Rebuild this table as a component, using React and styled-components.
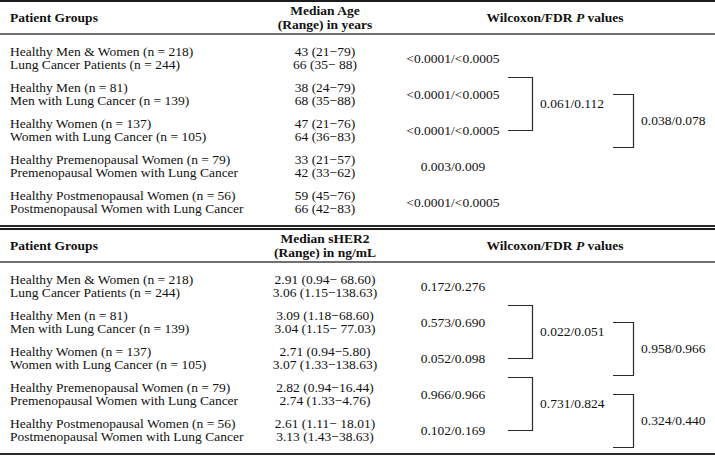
import React from 'react';
import styled, { createGlobalStyle } from 'styled-components';

const GlobalStyle = createGlobalStyle`
  html, body { margin: 0; padding: 0; background: #ffffff; }
  body {
    font-family: "Liberation Serif", "Times New Roman", serif;
    font-size: 13.5px;
    color: #111;
  }
`;

const PITCH = 36;
const L1 = { x1: 508, x2: 532, label: 540 };
const L2 = { x1: 613, x2: 633, label: 641 };

const tables = [
  {
    median: ['Median Age', '(Range) in years'],
    groups: [
      { a: 'Healthy Men & Women (n = 218)', b: 'Lung Cancer Patients (n = 244)', ma: '43 (21−79)', mb: '66 (35− 88)', p: '<0.0001/<0.0005' },
      { a: 'Healthy Men (n = 81)', b: 'Men with Lung Cancer (n = 139)', ma: '38 (24−79)', mb: '68 (35−88)', p: '<0.0001/<0.0005' },
      { a: 'Healthy Women (n = 137)', b: 'Women with Lung Cancer (n = 105)', ma: '47 (21−76)', mb: '64 (36−83)', p: '<0.0001/<0.0005' },
      { a: 'Healthy Premenopausal Women (n = 79)', b: 'Premenopausal Women with Lung Cancer', ma: '33 (21−57)', mb: '42 (33−62)', p: '0.003/0.009' },
      { a: 'Healthy Postmenopausal Women (n = 56)', b: 'Postmenopausal Women with Lung Cancer', ma: '59 (45−76)', mb: '66 (42−83)', p: '<0.0001/<0.0005' },
    ],
    brackets: [
      { level: 1, start: 1, label: '0.061/0.112' },
      { level: 2, start: 1, label: '0.038/0.078' },
    ],
  },
  {
    median: ['Median sHER2', '(Range) in ng/mL'],
    groups: [
      { a: 'Healthy Men & Women (n = 218)', b: 'Lung Cancer Patients (n = 244)', ma: '2.91 (0.94− 68.60)', mb: '3.06 (1.15−138.63)', p: '0.172/0.276' },
      { a: 'Healthy Men (n = 81)', b: 'Men with Lung Cancer (n = 139)', ma: '3.09 (1.18−68.60)', mb: '3.04 (1.15− 77.03)', p: '0.573/0.690' },
      { a: 'Healthy Women (n = 137)', b: 'Women with Lung Cancer (n = 105)', ma: '2.71 (0.94−5.80)', mb: '3.07 (1.33−138.63)', p: '0.052/0.098' },
      { a: 'Healthy Premenopausal Women (n = 79)', b: 'Premenopausal Women with Lung Cancer', ma: '2.82 (0.94−16.44)', mb: '2.74 (1.33−4.76)', p: '0.966/0.966' },
      { a: 'Healthy Postmenopausal Women (n = 56)', b: 'Postmenopausal Women with Lung Cancer', ma: '2.61 (1.11− 18.01)', mb: '3.13 (1.43−38.63)', p: '0.102/0.169' },
    ],
    brackets: [
      { level: 1, start: 1, label: '0.022/0.051' },
      { level: 2, start: 1, label: '0.958/0.966' },
      { level: 1, start: 3, label: '0.731/0.824' },
      { level: 2, start: 3, label: '0.324/0.440' },
    ],
  },
];

const Page = styled.div`
  width: 715px;
  display: flex;
  flex-direction: column;
  gap: 1px;
`;

const Table = styled.section`
  border-top: 2px solid #1c1c1c;
  border-bottom: 2px solid #2a2a2a;
`;

const Row = styled.div`
  display: grid;
  grid-template-columns: 255px 140px 1fr;
  align-items: center;
`;

const HeaderRow = styled(Row)`
  height: 31px;
  border-bottom: 2px solid #707070;
  font-weight: bold;
  line-height: 14px;
`;

const HeadLabel = styled.div`
  padding-left: 10px;
`;

const HeadCenter = styled.div`
  text-align: center;
  white-space: nowrap;
`;

const Body = styled.div`
  position: relative;
  margin: 5px 0;
`;

const Group = styled(Row)`
  height: ${PITCH}px;
  line-height: 13px;
`;

const LabelCell = styled.div`
  padding-left: 10px;
  white-space: nowrap;
`;

const MedianCell = styled.div`
  text-align: center;
  white-space: pre;
`;

const PCell = styled.div`
  width: 116px;
  text-align: center;
  white-space: nowrap;
`;

const Overlay = styled.div`
  position: absolute;
  inset: 0;
  pointer-events: none;
`;

const BracketSvg = styled.svg`
  position: absolute;
  left: 0;
  top: 0;
`;

const BracketLabel = styled.span`
  position: absolute;
  transform: translateY(-50%);
  line-height: 14px;
  white-space: nowrap;
`;

function bracketGeom(b) {
  const g = b.level === 1 ? L1 : L2;
  const top = b.level === 1 ? PITCH * b.start + 1 : PITCH * b.start + 18;
  const bottom = b.level === 1 ? PITCH * (b.start + 1) + 18 : PITCH * (b.start + 2) - 1;
  return { ...g, top, bottom, mid: (top + bottom) / 2 };
}

function Brackets({ items, height }) {
  return (
    <Overlay>
      <BracketSvg width="715" height={height} viewBox={`0 0 715 ${height}`}>
        {items.map((b, i) => {
          const g = bracketGeom(b);
          return (
            <polyline
              key={i}
              points={`${g.x1},${g.top + 0.5} ${g.x2 + 0.5},${g.top + 0.5} ${g.x2 + 0.5},${g.bottom + 0.5} ${g.x1},${g.bottom + 0.5}`}
              fill="none"
              stroke="#2b2b2b"
              strokeWidth="1.2"
            />
          );
        })}
      </BracketSvg>
      {items.map((b, i) => {
        const g = bracketGeom(b);
        return (
          <BracketLabel key={i} style={{ left: g.label, top: g.mid }}>
            {b.label}
          </BracketLabel>
        );
      })}
    </Overlay>
  );
}

function DataTable({ data }) {
  return (
    <Table>
      <HeaderRow>
        <HeadLabel>Patient Groups</HeadLabel>
        <HeadCenter>
          {data.median[0]}
          <br />
          {data.median[1]}
        </HeadCenter>
        <HeadCenter>
          Wilcoxon/FDR <i>P</i> values
        </HeadCenter>
      </HeaderRow>
      <Body>
        {data.groups.map((g, i) => (
          <Group key={i}>
            <LabelCell>
              {g.a}
              <br />
              {g.b}
            </LabelCell>
            <MedianCell>
              {g.ma}
              <br />
              {g.mb}
            </MedianCell>
            <PCell>{g.p}</PCell>
          </Group>
        ))}
        <Brackets items={data.brackets} height={PITCH * data.groups.length} />
      </Body>
    </Table>
  );
}

export default function App() {
  return (
    <>
      <GlobalStyle />
      <Page>
        {tables.map((t, i) => (
          <DataTable key={i} data={t} />
        ))}
      </Page>
    </>
  );
}
